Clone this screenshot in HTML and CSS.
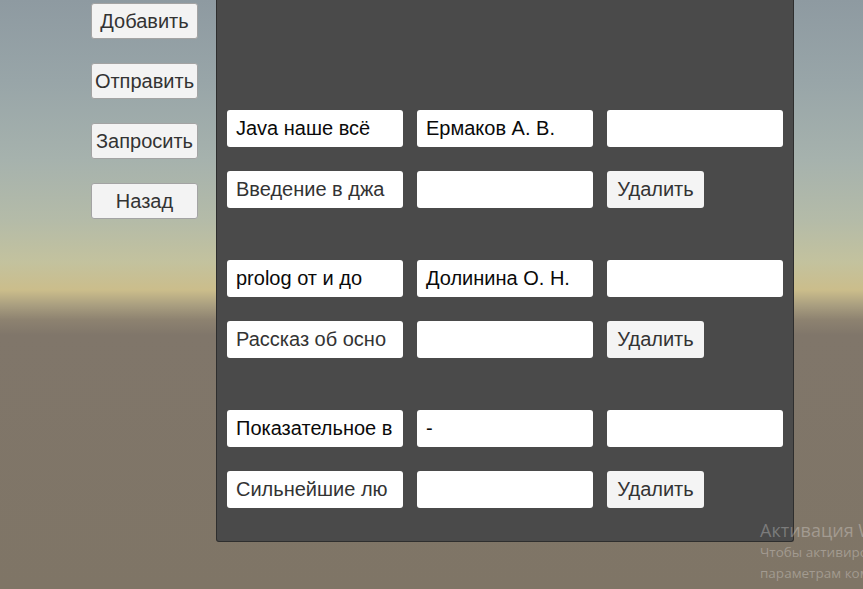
FILE: index.html
```html
<!DOCTYPE html>
<html lang="ru">
<head>
<meta charset="utf-8">
<title>Курсы</title>
<link rel="stylesheet" href="styles.css">
</head>
<body>
<div class="scene">
  <nav class="side">
    <button class="btn side-btn">Добавить</button>
    <button class="btn side-btn">Отправить</button>
    <button class="btn side-btn">Запросить</button>
    <button class="btn side-btn">Назад</button>
  </nav>
  <main class="panel">
    <section class="group">
      <div class="row">
        <div class="field strong">Java наше всё</div>
        <div class="field strong">Ермаков А. В.</div>
        <div class="field"></div>
      </div>
      <div class="row">
        <div class="field">Введение в джа</div>
        <div class="field"></div>
        <button class="btn del">Удалить</button>
      </div>
    </section>
    <section class="group">
      <div class="row">
        <div class="field strong">prolog от и до</div>
        <div class="field strong">Долинина О. Н.</div>
        <div class="field"></div>
      </div>
      <div class="row">
        <div class="field">Рассказ об осно</div>
        <div class="field"></div>
        <button class="btn del">Удалить</button>
      </div>
    </section>
    <section class="group">
      <div class="row">
        <div class="field strong">Показательное в</div>
        <div class="field strong">-</div>
        <div class="field"></div>
      </div>
      <div class="row">
        <div class="field">Сильнейшие лю</div>
        <div class="field"></div>
        <button class="btn del">Удалить</button>
      </div>
    </section>
  </main>
  <div class="watermark">
    <div class="wm-title">Активация Windows</div>
    <div class="wm-line">Чтобы активировать Windows, перейдите к</div>
    <div class="wm-line">параметрам компьютера.</div>
  </div>
</div>
</body>
</html>
```

FILE: styles.css
```css
* { box-sizing: border-box; }
html, body { margin: 0; padding: 0; }
body {
  width: 863px;
  height: 589px;
  overflow: hidden;
  font-family: "Liberation Sans", Arial, sans-serif;
}
.scene {
  position: relative;
  width: 863px;
  height: 589px;
  overflow: hidden;
  display: flex;
  align-items: flex-start;
  background: linear-gradient(to bottom,
    #8e9aa1 0px,
    #98a5a8 80px,
    #a6b2ad 160px,
    #b4bba8 220px,
    #c3c29e 262px,
    #cbbd8b 290px,
    #aa9f80 305px,
    #8d8270 320px,
    #80766a 335px,
    #7f7566 589px);
}
.side {
  display: flex;
  flex-direction: column;
  gap: 24px;
  margin-left: 91px;
  padding-top: 3px;
  width: 107px;
}
.btn {
  font-family: "Liberation Sans", Arial, sans-serif;
  font-size: 20px;
  color: #333333;
  background: #f3f3f3;
  border: 1px solid #a3a3a3;
  border-radius: 3px;
  padding: 0;
  margin: 0;
  display: flex;
  align-items: center;
  justify-content: center;
}
.side-btn {
  width: 107px;
  height: 36px;
}
.panel {
  margin-left: 18px;
  width: 578px;
  height: 542px;
  background: #4a4a4a;
  border: 1px solid #2e2e2e;
  border-top: none;
  border-radius: 0 0 3px 3px;
  padding: 110px 0 0 10px;
  display: flex;
  flex-direction: column;
  gap: 52px;
}
.group {
  display: flex;
  flex-direction: column;
  gap: 24px;
}
.row {
  display: flex;
  gap: 14px;
}
.field {
  width: 176px;
  height: 37px;
  background: #ffffff;
  border-radius: 3px;
  padding-left: 9px;
  font-size: 20px;
  color: #333333;
  display: flex;
  align-items: center;
  white-space: nowrap;
  overflow: hidden;
}
.field.strong { color: #0a0a0a; }
.del {
  width: 97px;
  height: 37px;
  border: none;
  background: #f4f4f4;
}
.watermark {
  position: absolute;
  left: 760px;
  top: 518px;
  white-space: nowrap;
  color: rgba(255, 255, 255, 0.28);
  font-family: "Open Sans", "Noto Sans", sans-serif;
}
.wm-title { font-size: 18px; line-height: 24px; }
.wm-line { font-size: 13.5px; line-height: 21px; }
```
